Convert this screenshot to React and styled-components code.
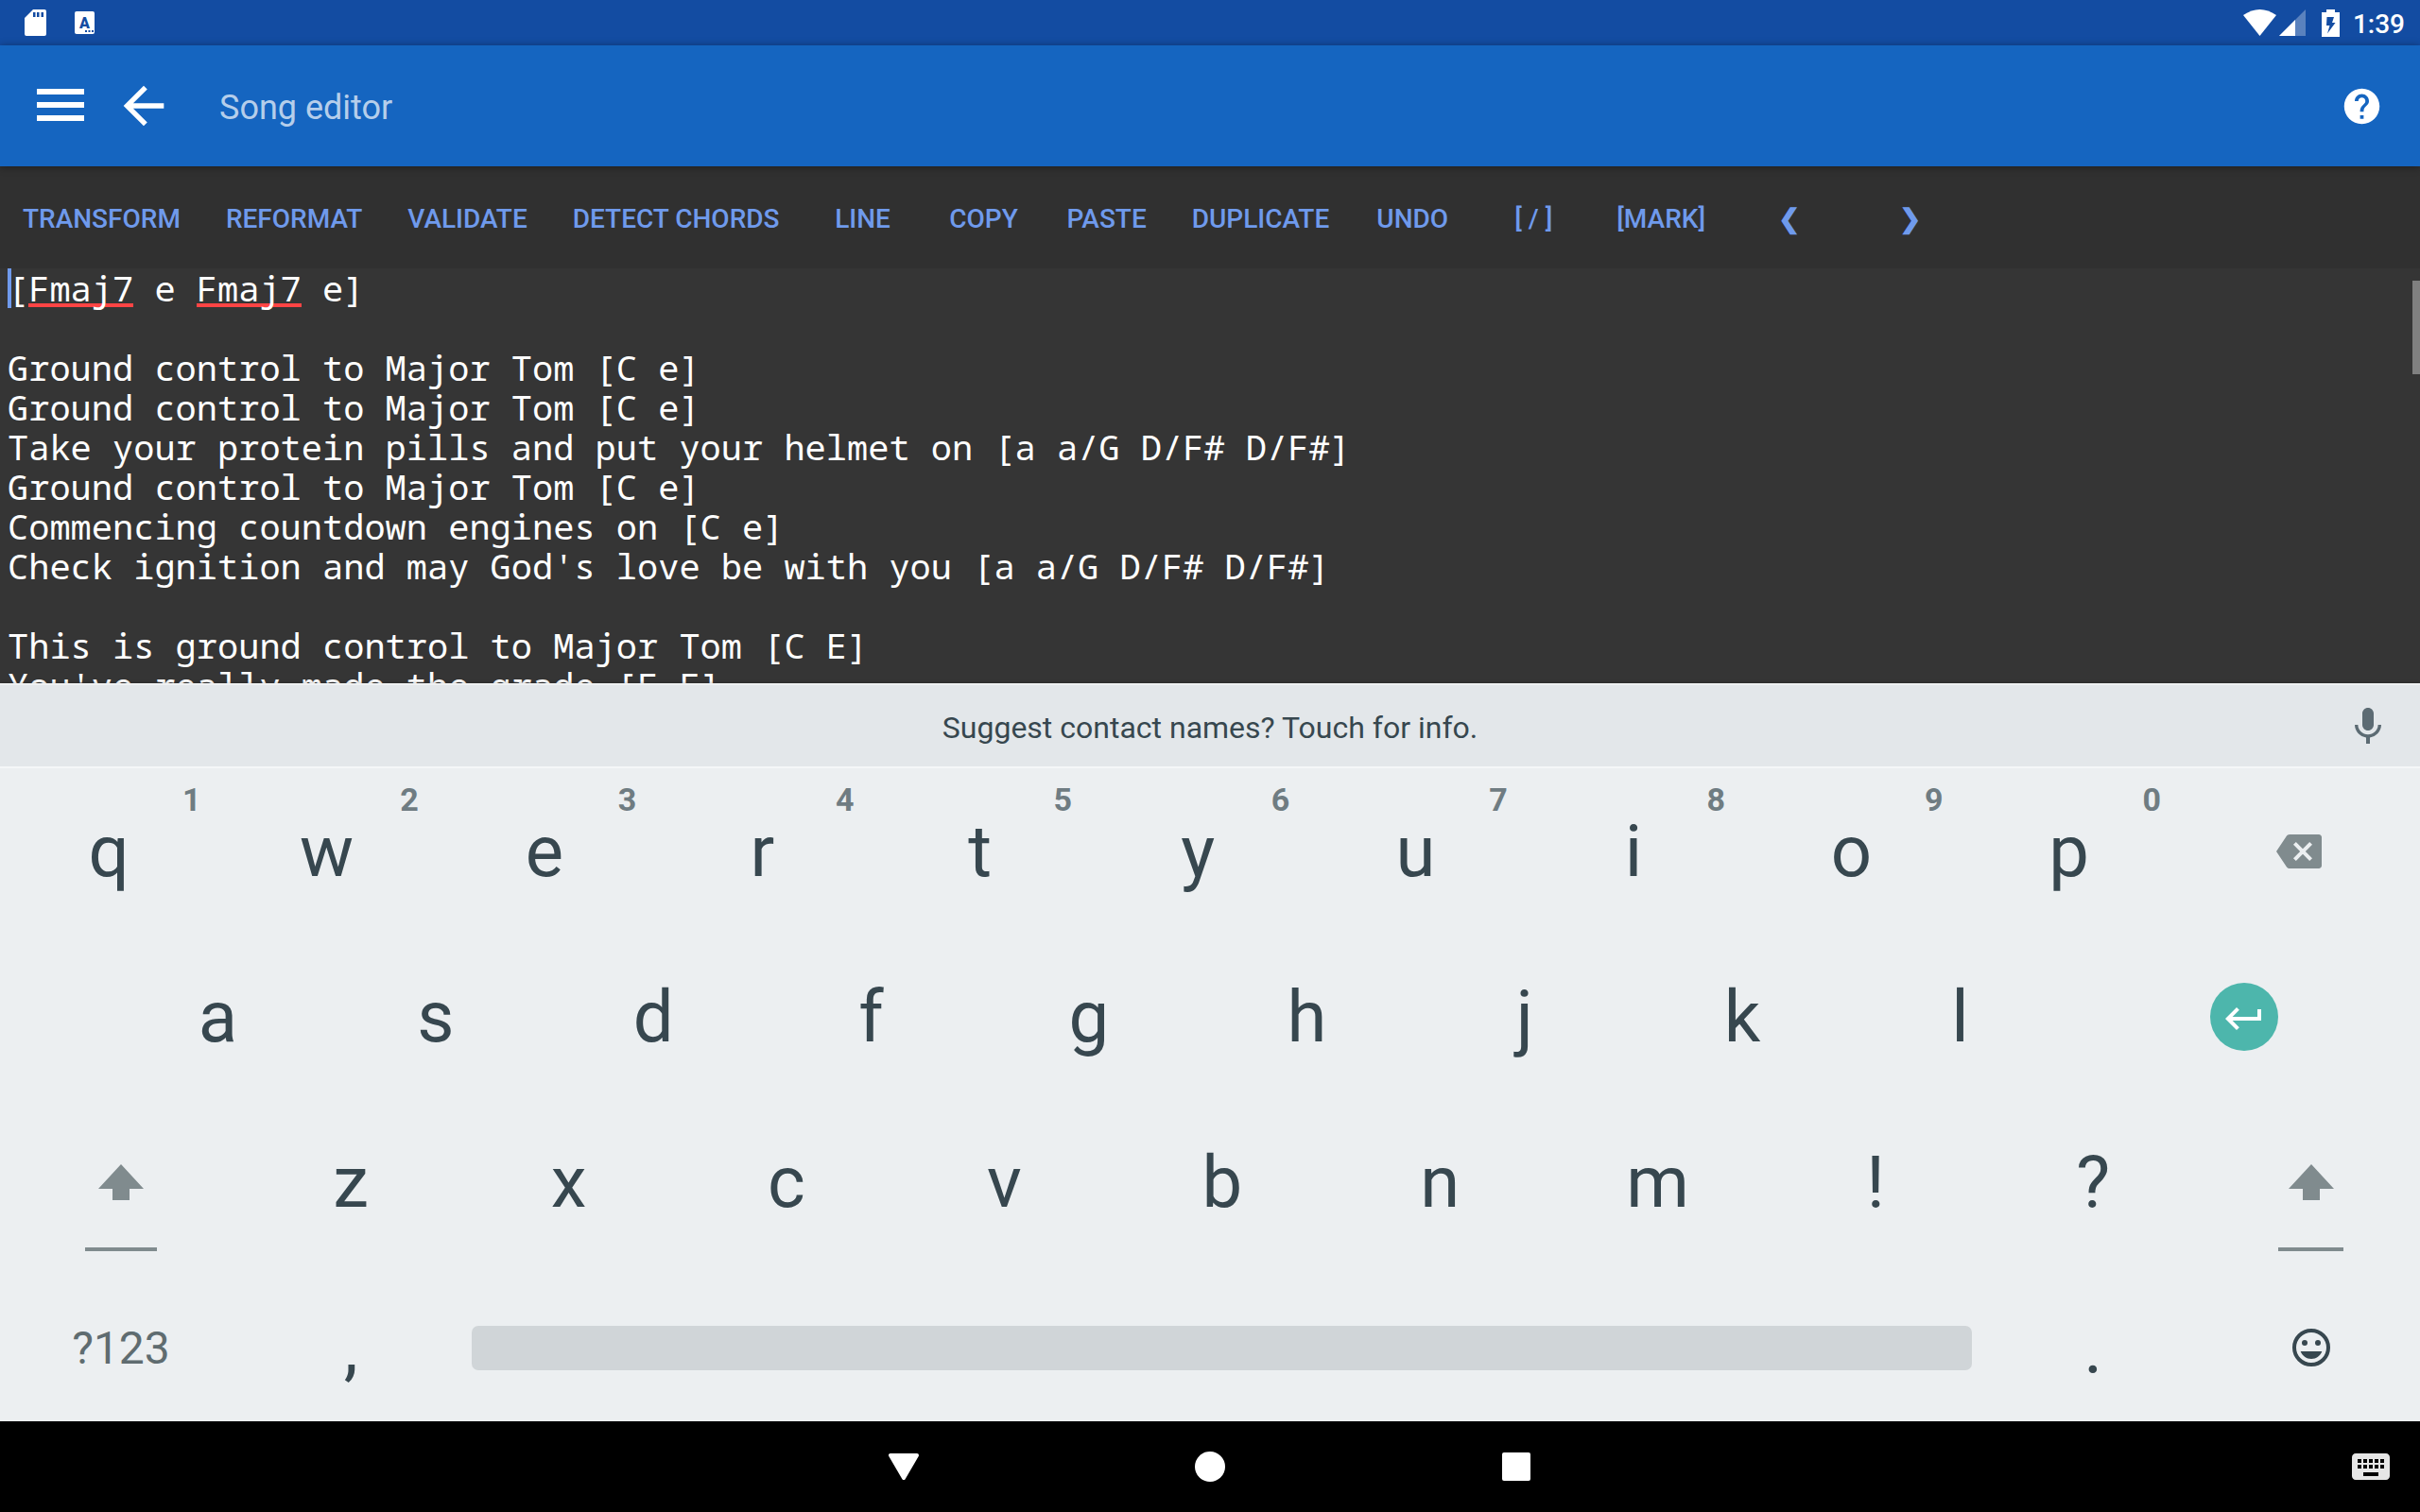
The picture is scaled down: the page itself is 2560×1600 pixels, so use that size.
import styled, { createGlobalStyle } from "styled-components";

const song = `[Fmaj7 e Fmaj7 e]

Ground control to Major Tom [C e]
Ground control to Major Tom [C e]
Take your protein pills and put your helmet on [a a/G D/F# D/F#]
Ground control to Major Tom [C e]
Commencing countdown engines on [C e]
Check ignition and may God's love be with you [a a/G D/F# D/F#]

This is ground control to Major Tom [C E]
You've really made the grade [F F]`;

const actions = [
    "Transform", "Reformat", "Validate", "Detect chords", "Line", "Copy", "Paste",
    "Duplicate", "Undo", "[ / ]", "[Mark]",
];
const arrows = ["❮", "❯"];

const topRow = ["q", "w", "e", "r", "t", "y", "u", "i", "o", "p"];
const homeRow = ["a", "s", "d", "f", "g", "h", "j", "k", "l"];
const bottomRow = ["z", "x", "c", "v", "b", "n", "m", "!", "?"];

export default function App() {
    return (
        <Screen>
            <GlobalStyle />
            <StatusBar />
            <AppBar />
            <Toolbar>
                {actions.map((action) => (
                    <ToolbarButton key={action} type="button">{action}</ToolbarButton>
                ))}
                {arrows.map((arrow) => (
                    <ToolbarButton key={arrow} type="button" $bold>{arrow}</ToolbarButton>
                ))}
            </Toolbar>
            <Editor />
            <Keyboard />
            <NavigationBar />
        </Screen>
    );
}

function StatusBar() {
    return (
        <StyledStatusBar>
            <Notifications>
                <svg width="23" height="28" viewBox="0 0 23 28">
                    <path fill="#fff" fillRule="evenodd" d="M9 0h12a2 2 0 0 1 2 2v24a2 2 0 0 1-2 2H2a2 2 0 0 1-2-2V9zM9 3v5h2.5V3zM13 3v5h2.5V3zM17.5 3v5H20V3z" />
                </svg>
                <svg width="21" height="24" viewBox="0 0 21 24">
                    <rect width="21" height="24" rx="2" fill="#fff" />
                    <text x="10.5" y="18" textAnchor="middle" fontFamily="Roboto, sans-serif" fontWeight="900" fontSize="16" fill="#134ca2">A</text>
                    <path fill="#134ca2" d="M11 20h2v2h-2zM14.500 20h2v2h-2zM18 20h2v2h-2z" />
                </svg>
            </Notifications>
            <SystemIcons>
                <svg width="35" height="28" viewBox="0 0 35 28">
                    <path fill="#fff" d="M0 6Q17.500-6 35 6L17.500 28z" />
                </svg>
                <svg width="28" height="28" viewBox="0 0 28 28">
                    <path fill="#fff" fillOpacity=".3" d="M28 0v28H0z" />
                    <path fill="#fff" d="M17 11v17H0z" />
                </svg>
                <Battery width="19" height="29" viewBox="0 0 19 29">
                    <path fill="#fff" d="M5 0h9v3h5v26H0V3h5z" />
                    <path fill="#134ca2" d="M5.500 8H13l-2 6h3.500L6 25.500 8.500 17H5z" />
                </Battery>
                <time>1:39</time>
            </SystemIcons>
        </StyledStatusBar>
    );
}

function AppBar() {
    return (
        <StyledAppBar>
            <IconButton type="button" aria-label="Menu">
                <svg width="50" height="36" viewBox="0 0 50 36">
                    <path fill="#fff" d="M0 0h50v6H0zM0 14h50v6H0zM0 28h50v6H0z" />
                </svg>
            </IconButton>
            <BackButton type="button" aria-label="Back">
                <svg width="64" height="64" viewBox="0 0 24 24">
                    <path fill="#fff" d="M20 11H7.830l5.590-5.590L12 4l-8 8 8 8 1.410-1.410L7.830 13H20z" />
                </svg>
            </BackButton>
            <h1>Song editor</h1>
            <IconButton type="button" aria-label="Help">
                <svg width="45" height="45" viewBox="0 0 24 24">
                    <path fill="#fff" d="M12 2C6.480 2 2 6.480 2 12s4.480 10 10 10 10-4.480 10-10S17.520 2 12 2zm1 17h-2v-2h2v2zm2.070-7.750l-.9.920C13.450 12.900 13 13.500 13 15h-2v-.5c0-1.100.45-2.100 1.170-2.830l1.240-1.260c.37-.36.590-.86.590-1.410 0-1.100-.9-2-2-2s-2 .9-2 2H8c0-2.210 1.790-4 4-4s4 1.790 4 4c0 .88-.36 1.680-.93 2.250z" />
                </svg>
            </IconButton>
        </StyledAppBar>
    );
}

function Editor() {
    return (
        <StyledEditor>
            {/* spell check marks sit behind the text, column is in characters */}
            <Misspelling $column={1} />
            <Misspelling $column={9} />
            <textarea aria-label="Song text" spellCheck="false" defaultValue={song} />
            <Caret />
            <ScrollThumb />
        </StyledEditor>
    );
}

function ShiftKey({ wide }) {
    return (
        <Key type="button" aria-label="Shift" $units={wide ? 10 : 9}>
            <svg width="48" height="38" viewBox="0 0 48 38">
                <path fill="#808b8e" d="M24 0l24 26H33v12H15V26H0z" />
            </svg>
            <LockMark />
        </Key>
    );
}

function Keyboard() {
    return (
        <StyledKeyboard>
            <Suggestions>
                <p>Suggest contact names? Touch for info.</p>
                <IconButton type="button" aria-label="Voice input">
                    <svg width="48" height="48" viewBox="0 0 24 24">
                        <path fill="#5c6b73" d="M12 14c1.660 0 3-1.340 3-3V5c0-1.660-1.340-3-3-3S9 3.340 9 5v6c0 1.660 1.340 3 3 3zm5.300-3c0 3-2.540 5.100-5.300 5.100S6.700 14 6.700 11H5c0 3.410 2.720 6.230 6 6.720V21h2v-3.280c3.280-.48 6-3.300 6-6.720h-1.700z" />
                    </svg>
                </IconButton>
            </Suggestions>
            <Keys>
                <Row>
                    {topRow.map((letter, i) => (
                        <Key key={letter} type="button">
                            {letter}
                            <Hint>{(i + 1) % 10}</Hint>
                        </Key>
                    ))}
                    <Key type="button" aria-label="Backspace" $units={10}>
                        <svg width="48" height="48" viewBox="0 0 24 24">
                            <path fill="#808b8e" d="M22.500 3H7c-.69 0-1.230.35-1.590.88L0 12l5.410 8.110c.36.530.9.890 1.590.890h15.500c.8 0 1.500-.7 1.500-1.500v-15c0-.8-.7-1.500-1.500-1.500zM19 15.590L17.590 17 14 13.410 10.410 17 9 15.590 12.590 12 9 8.410 10.410 7 14 10.590 17.590 7 19 8.410 15.410 12z" />
                        </svg>
                    </Key>
                </Row>
                <Row $indent>
                    {homeRow.map((letter) => (
                        <Key key={letter} type="button">{letter}</Key>
                    ))}
                    <EnterKey type="button" aria-label="Enter">
                        <span>
                            <svg width="48" height="48" viewBox="0 0 24 24">
                                <path fill="#fff" d="M19 7v4H5.830l3.580-3.590L8 6l-6 6 6 6 1.410-1.410L5.830 13H21V7z" />
                            </svg>
                        </span>
                    </EnterKey>
                </Row>
                <Row>
                    <ShiftKey wide />
                    {bottomRow.map((letter) => (
                        <Key key={letter} type="button">{letter}</Key>
                    ))}
                    <ShiftKey />
                </Row>
                <Row>
                    <SymbolsKey type="button" $units={10}>?123</SymbolsKey>
                    <Key type="button">,</Key>
                    <SpaceKey type="button" aria-label="Space" $units={63}><span /></SpaceKey>
                    <Key type="button">.</Key>
                    <Key type="button" aria-label="Emoji">
                        <svg width="48" height="48" viewBox="0 0 24 24">
                            <circle cx="12" cy="12" r="9" fill="none" stroke="#37474f" strokeWidth="2" />
                            <circle cx="8.500" cy="9.500" r="1.500" fill="#37474f" />
                            <circle cx="15.500" cy="9.500" r="1.500" fill="#37474f" />
                            <path fill="#37474f" d="M12 18c2.610 0 4.830-1.670 5.650-4H6.350c.82 2.330 3.040 4 5.650 4z" />
                        </svg>
                    </Key>
                </Row>
            </Keys>
        </StyledKeyboard>
    );
}

function NavigationBar() {
    return (
        <StyledNavigation>
            <NavButton type="button" aria-label="Hide keyboard">
                <svg width="32" height="28" viewBox="0 0 32 28">
                    <path fill="#fff" stroke="#fff" strokeWidth="4" strokeLinejoin="round" d="M2 2h28L16 26z" />
                </svg>
            </NavButton>
            <NavButton type="button" aria-label="Home">
                <svg width="32" height="32" viewBox="0 0 32 32">
                    <circle cx="16" cy="16" r="16" fill="#fff" />
                </svg>
            </NavButton>
            <NavButton type="button" aria-label="Overview">
                <svg width="30" height="30" viewBox="0 0 30 30">
                    <rect width="30" height="30" rx="2" fill="#fff" />
                </svg>
            </NavButton>
            <SwitchKeyboard type="button" aria-label="Switch keyboard">
                <svg width="48" height="48" viewBox="0 0 24 24">
                    <path fill="#e6e6e6" d="M20 5H4c-1.100 0-1.990.9-1.990 2L2 17c0 1.100.9 2 2 2h16c1.100 0 2-.9 2-2V7c0-1.100-.9-2-2-2zm-9 3h2v2h-2V8zm0 3h2v2h-2v-2zM8 8h2v2H8V8zm0 3h2v2H8v-2zm-1 2H5v-2h2v2zm0-3H5V8h2v2zm9 7H8v-2h8v2zm0-4h-2v-2h2v2zm0-3h-2V8h2v2zm3 3h-2v-2h2v2zm0-3h-2V8h2v2z" />
                </svg>
            </SwitchKeyboard>
        </StyledNavigation>
    );
}

const GlobalStyle = createGlobalStyle`
    * {
        box-sizing: border-box;
    }

    body {
        margin: 0;
        background: #000;
        font-family: Roboto, sans-serif;
    }

    button {
        border: 0;
        padding: 0;
        background: none;
        color: inherit;
        font-family: inherit;
        cursor: pointer;
    }

    svg {
        display: block;
    }
`;

const Screen = styled.div`
    display: flex;
    flex-direction: column;
    min-height: 100vh;
`;

const StyledStatusBar = styled.header`
    display: flex;
    justify-content: space-between;
    align-items: center;
    height: 48px;
    padding: 0 16px 0 26px;
    background: #134ca2;
    color: #fff;
`;

const Notifications = styled.div`
    display: flex;
    align-items: center;
    gap: 30px;
`;

const SystemIcons = styled.div`
    display: flex;
    align-items: center;
    gap: 3px;

    time {
        padding-top: 2px;
        font-size: 28px;
        font-weight: 500;
    }
`;

const Battery = styled.svg`
    margin: 0 11px 0 14px;
`;

const StyledAppBar = styled.div`
    position: relative;
    display: flex;
    align-items: center;
    height: 128px;
    padding: 0 39px;
    background: #1565c0;
    box-shadow: 0 1px 8px rgba(0, 0, 0, 0.4);

    h1 {
        flex: 1;
        margin: 0;
        padding-top: 4px;
        color: rgba(255, 255, 255, 0.7);
        font-size: 36px;
        font-weight: 400;
    }
`;

const IconButton = styled.button`
    display: flex;
`;

const BackButton = styled(IconButton)`
    margin: 0 48px 0 31px;
`;

const Toolbar = styled.div`
    display: flex;
    height: 108px;
    background: #303030;
`;

const ToolbarButton = styled.button`
    min-width: 128px;
    padding: 2px 24px 0;
    color: #6f9aec;
    font-size: 28px;
    font-weight: ${(props) => (props.$bold ? 700 : 500)};
    text-transform: uppercase;
    white-space: nowrap;
`;

const StyledEditor = styled.main`
    position: relative;
    display: flex;
    flex: 1;
    min-height: 168px;
    background: #353535;
    font-family: "Droid Sans Mono", "Noto Sans Mono", "DejaVu Sans Mono", monospace;
    font-size: 37px;

    textarea {
        position: relative;
        flex: 1;
        padding: 0 8px;
        border: 0;
        outline: 0;
        background: transparent;
        color: #fff;
        font: inherit;
        line-height: 42px;
        overflow: hidden;
        resize: none;
    }
`;

const Misspelling = styled.span`
    position: absolute;
    top: 37px;
    left: calc(8px + ${(props) => props.$column}ch);
    width: 5ch;
    height: 4px;
    background: #ff4444;
`;

const Caret = styled.span`
    position: absolute;
    top: 0;
    left: 8px;
    width: 4px;
    height: 42px;
    background: #6f9aec;
`;

const ScrollThumb = styled.span`
    position: absolute;
    top: 13px;
    right: 0;
    width: 8px;
    height: 99px;
    background: #808080;
`;

const StyledKeyboard = styled.section`
    position: relative;
    background: #eceff1;
    color: #37474f;
    box-shadow: 0 0 4px rgba(0, 0, 0, 0.3);
`;

const Suggestions = styled.div`
    display: grid;
    grid-template-columns: 1fr auto 1fr;
    align-items: center;
    height: 90px;
    padding: 2px 31px 0;
    border-top: 2px solid #eff1f2;
    border-bottom: 2px solid #f5f7f8;
    background: #e3e7ea;

    p {
        grid-column: 2;
        margin: 0;
        padding-top: 2px;
        font-size: 32px;
    }

    button {
        justify-self: end;
    }
`;

const Keys = styled.div`
    display: flex;
    flex-direction: column;
    gap: 19px;
    padding-top: 10px;
`;

const Row = styled.div`
    display: flex;
    height: 156px;
    padding-left: ${(props) => (props.$indent ? "4.5%" : "0")};
`;

const Key = styled.button`
    position: relative;
    display: flex;
    flex: 0 0 ${(props) => props.$units || 9}vw;
    justify-content: center;
    align-items: center;
    font-size: 76px;
`;

const Hint = styled.span`
    position: absolute;
    top: 6px;
    right: 18px;
    color: #6f7c82;
    font-size: 34px;
    font-weight: 700;
    line-height: 34px;
`;

const LockMark = styled.span`
    position: absolute;
    bottom: 5px;
    width: 30%;
    height: 4px;
    background: #808b8e;
`;

const EnterKey = styled(Key)`
    flex: 1;

    span {
        width: 72px;
        height: 72px;
        padding: 14px 12px 10px;
        border-radius: 50%;
        background: #4db6ac;
    }
`;

const SymbolsKey = styled(Key)`
    color: #5f6c70;
    font-size: 48px;
`;

const SpaceKey = styled(Key)`
    padding: 0 13px;

    span {
        flex: 1;
        height: 47px;
        border-radius: 7px;
        background: #d0d5d8;
    }
`;

const StyledNavigation = styled.nav`
    position: relative;
    display: flex;
    justify-content: center;
    align-items: center;
    height: 96px;
    background: #000;
`;

const NavButton = styled.button`
    display: flex;
    justify-content: center;
    align-items: center;
    width: 324px;
    height: 96px;
`;

const SwitchKeyboard = styled.button`
    position: absolute;
    right: 28px;
`;
